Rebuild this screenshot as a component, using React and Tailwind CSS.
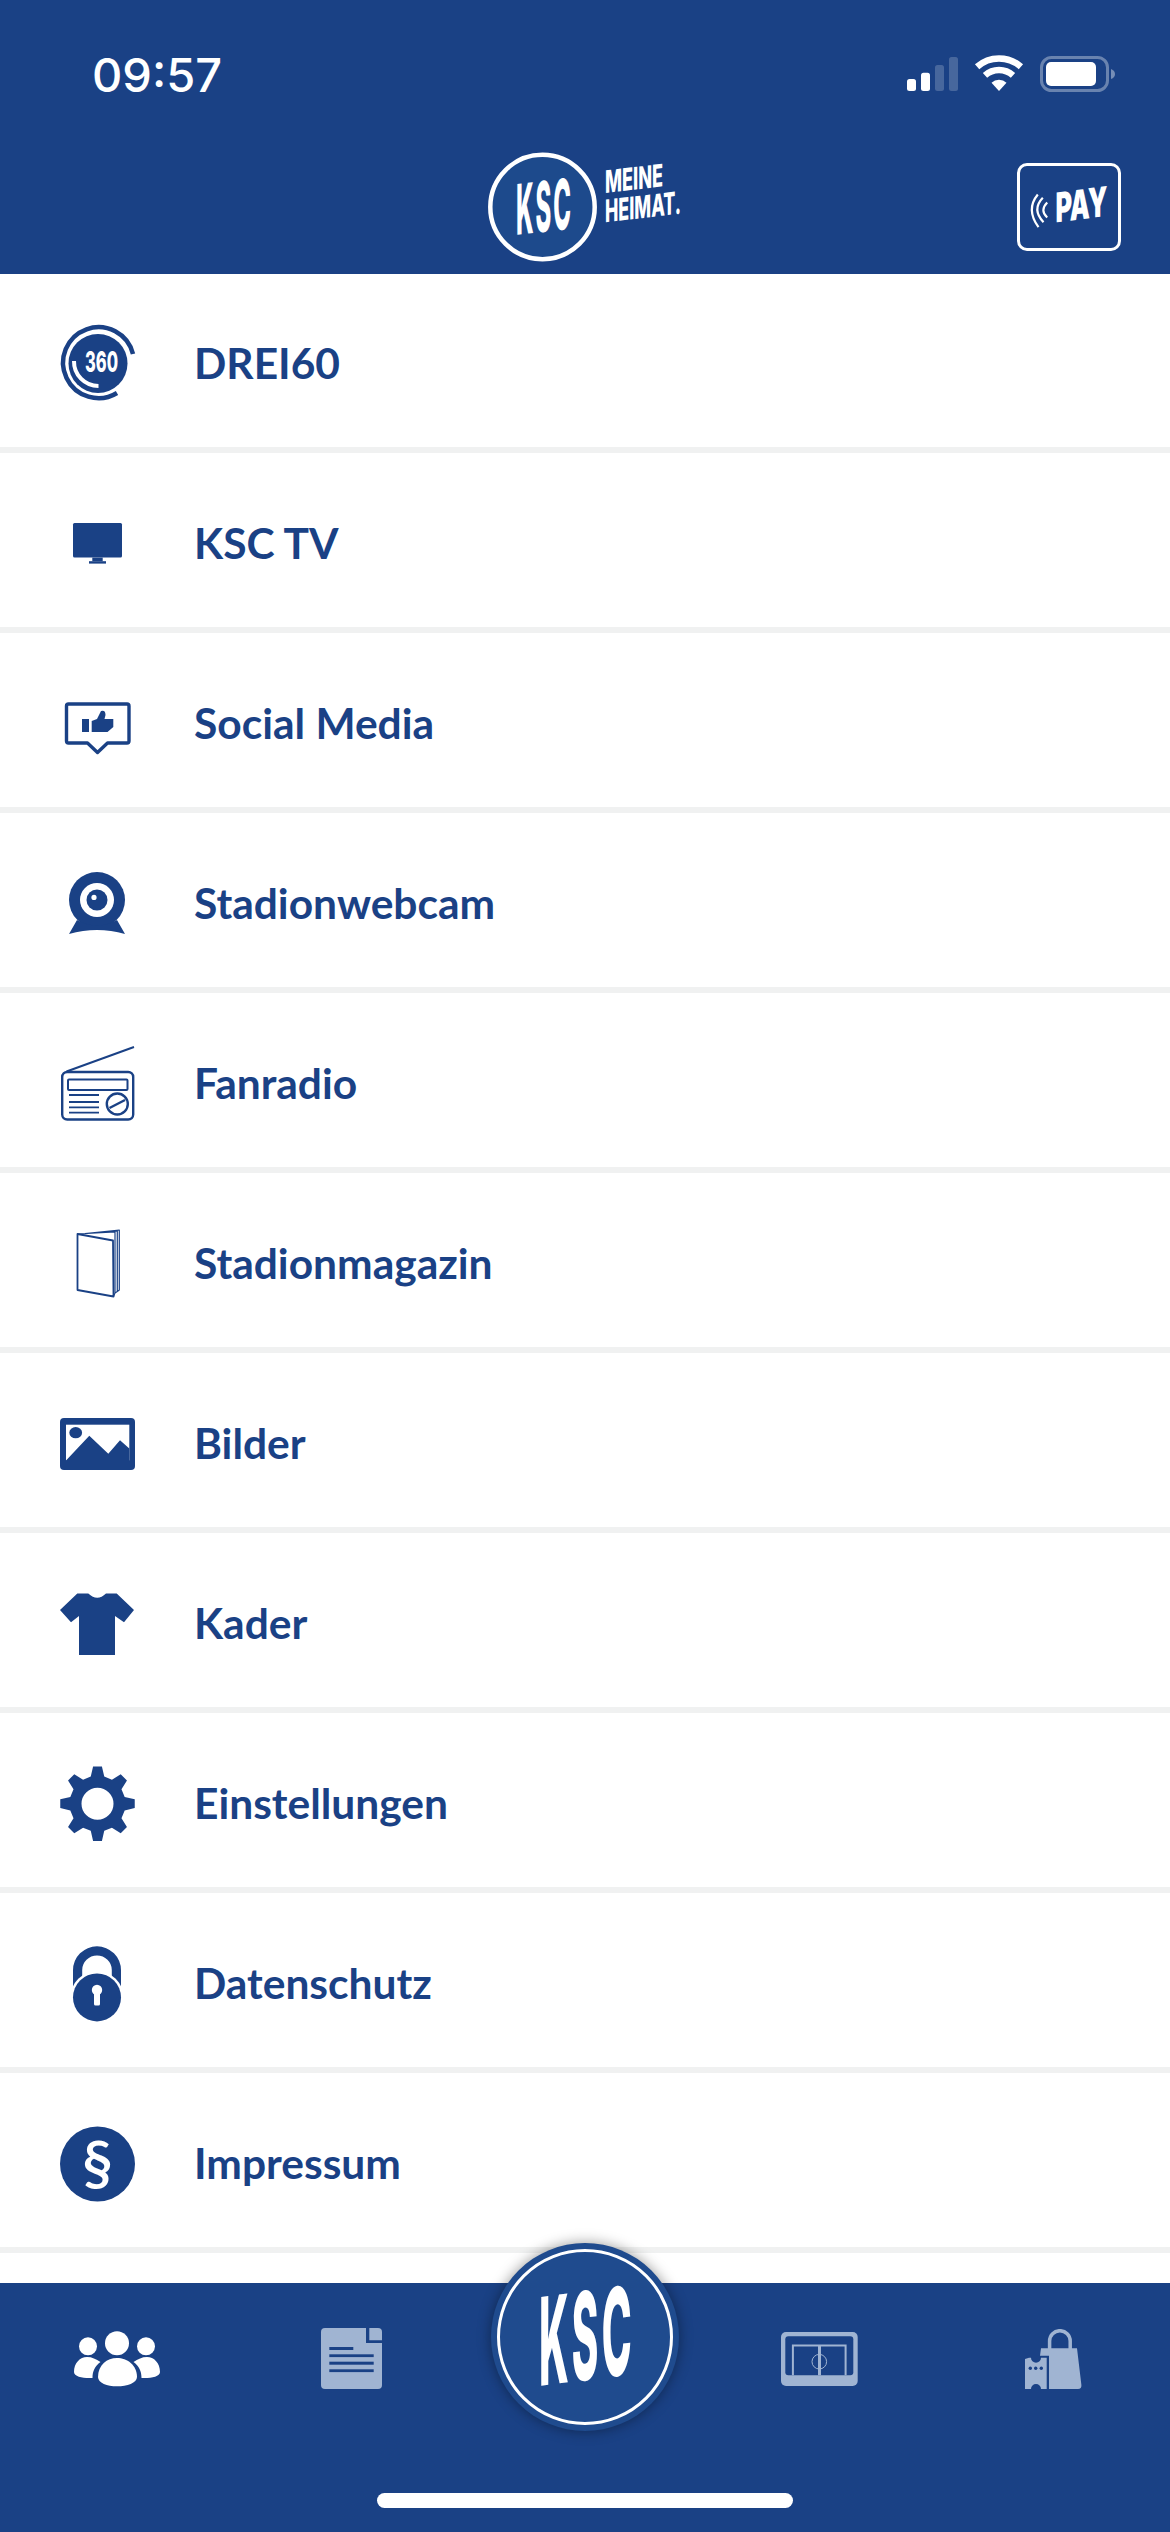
const NAVY = '#1a4185';

function gearPath() {
  const cx = 40.5, cy = 40.7, teeth = 8;
  const pts = [];
  for (let i = 0; i < teeth; i++) {
    const a = (i * Math.PI * 2) / teeth - Math.PI / 2;
    const step = Math.PI / teeth;
    const rows = [
      [28, -step * 0.62],
      [37.5, -step * 0.3],
      [37.5, step * 0.3],
      [28, step * 0.62],
    ];
    rows.forEach(([r, d]) => {
      pts.push(`${(cx + r * Math.cos(a + d)).toFixed(2)} ${(cy + r * Math.sin(a + d)).toFixed(2)}`);
    });
  }
  return `M${pts.join('L')}Z M56.5 40.7 A16 16 0 1 0 24.5 40.7 A16 16 0 1 0 56.5 40.7 Z`;
}

function Icon360() {
  return (
    <>
      <path d="M76 31 A35.5 35.5 0 1 0 60 70" fill="none" stroke={NAVY} strokeWidth="4.5" />
      <circle cx="41" cy="40.4" r="29.5" fill={NAVY} />
      <path d="M17 38 A24.5 24.5 0 0 0 41.5 63" fill="none" stroke="#fff" strokeWidth="4" />
      <text x="28" y="49" textLength="33" lengthAdjust="spacingAndGlyphs" fontSize="28" className="font-['Inter',sans-serif] font-extrabold fill-white">360</text>
    </>
  );
}

function IconTv() {
  return (
    <>
      <rect x="16" y="20" width="49" height="34.6" rx="1.5" fill={NAVY} />
      <rect x="35.3" y="54.6" width="10.4" height="3.6" fill={NAVY} />
      <rect x="32" y="58.2" width="17" height="2.4" fill={NAVY} />
    </>
  );
}

function IconSocial() {
  return (
    <>
      <path d="M11.5 21 H70 Q72 21 72 23 V58 Q72 60 70 60 H50.5 L40.5 69.5 L30.5 60 H11.5 Q9.5 60 9.5 58 V23 Q9.5 21 11.5 21 Z" fill="none" stroke={NAVY} strokeWidth="3.4" strokeLinejoin="round" />
      <rect x="25" y="36" width="7" height="13" fill={NAVY} />
      <path d="M34.7 38 L40 36 L44 28 Q48.5 26.5 48.5 32 L47.5 36 H56.3 V44 L50.5 49 H34.7 Z" fill={NAVY} />
    </>
  );
}

function IconWebcam() {
  return (
    <>
      <circle cx="40" cy="37" r="28" fill={NAVY} />
      <circle cx="40" cy="37" r="17" fill="#fff" />
      <circle cx="40" cy="37" r="10.5" fill={NAVY} />
      <circle cx="37" cy="34.4" r="2.6" fill="#fff" />
      <path d="M20 57 L12 71 Q40 63 68 71 L60 57 Q40 68 20 57 Z" fill={NAVY} />
    </>
  );
}

function IconRadio() {
  return (
    <g fill="none" stroke={NAVY}>
      <path d="M9.5 28.5 L77 4" strokeWidth="2" />
      <rect x="5.2" y="29" width="71" height="47.5" rx="5" strokeWidth="2.4" />
      <rect x="11" y="36.6" width="59.5" height="10.4" rx="1" strokeWidth="2" />
      <path d="M12 52 H42 M12 59 H42 M12 64.4 H42 M12 69.6 H42" strokeWidth="1.8" />
      <circle cx="60.3" cy="61" r="10.5" strokeWidth="2.4" />
      <path d="M52.5 65 L68 57" strokeWidth="2.4" />
    </g>
  );
}

function IconMagazine() {
  return (
    <g fill="none" stroke={NAVY} strokeLinejoin="round">
      <path d="M20.5 11 L56 17.5 L56.5 73.5 L20.5 67 Z" strokeWidth="1.8" />
      <path d="M20.5 11 L58 9 V70 L56.5 73.5 M24 11 L60.3 8 V68.5 L58 70 M28 10.5 L62.3 7 V67 L60.3 68.5" strokeWidth="1.2" />
    </g>
  );
}

function IconPicture() {
  return (
    <>
      <rect x="3" y="15" width="75" height="52" rx="4" fill={NAVY} />
      <rect x="9" y="21.7" width="63.3" height="35.7" fill="#fff" />
      <ellipse cx="18.7" cy="29.7" rx="6.4" ry="5.6" fill={NAVY} />
      <path d="M9 57.4 L32.3 32.8 L51.3 50.7 L63 37.3 L72.3 45.4 V58 H9 Z" fill={NAVY} />
    </>
  );
}

function IconShirt() {
  return <path d="M3 27 L20.3 10.6 H31.3 Q40.3 19 49 10.6 H59.7 L77 27 L67 39.2 L58 33 V72 H22 V33 L14 39.2 Z" fill={NAVY} />;
}

function IconGear() {
  return <path d={gearPath()} fill={NAVY} fillRule="evenodd" />;
}

function IconLock() {
  return (
    <>
      <path d="M16 44 V27.3 A24 24 0 0 1 64 27.3 V44 H54.8 V27 A14.8 14.5 0 0 0 25.2 27 V44 Z" fill={NAVY} />
      <circle cx="40" cy="54.4" r="26.5" fill="#fff" />
      <circle cx="40" cy="54.4" r="24" fill={NAVY} />
      <circle cx="40" cy="47" r="5.2" fill="#fff" />
      <rect x="37" y="47" width="6" height="15.5" rx="1.5" fill="#fff" />
    </>
  );
}

function IconParagraph() {
  return (
    <>
      <circle cx="40.5" cy="41" r="37.5" fill={NAVY} />
      <text x="40.5" y="62" textAnchor="middle" fontSize="62" className="font-['Lato',sans-serif] font-semibold fill-white">§</text>
    </>
  );
}

const ITEMS = [
  { label: 'DREI60', Icon: Icon360 },
  { label: 'KSC TV', Icon: IconTv },
  { label: 'Social Media', Icon: IconSocial },
  { label: 'Stadionwebcam', Icon: IconWebcam },
  { label: 'Fanradio', Icon: IconRadio },
  { label: 'Stadionmagazin', Icon: IconMagazine },
  { label: 'Bilder', Icon: IconPicture },
  { label: 'Kader', Icon: IconShirt },
  { label: 'Einstellungen', Icon: IconGear },
  { label: 'Datenschutz', Icon: IconLock },
  { label: 'Impressum', Icon: IconParagraph },
];

function StatusIcons() {
  return (
    <svg width="208" height="38" viewBox="0 0 208 38">
      <rect x="0" y="24" width="9" height="12" rx="2.5" fill="#fff" />
      <rect x="14" y="17.7" width="9" height="18.3" rx="2.5" fill="#fff" />
      <rect x="28" y="10" width="9" height="26" rx="2.5" fill="#fff" fillOpacity="0.2" />
      <rect x="42" y="2" width="9" height="34" rx="2.5" fill="#fff" fillOpacity="0.2" />
      <path d="M70.1 11.7 A33 33 0 0 1 113.9 11.7" fill="none" stroke="#fff" strokeWidth="6.5" />
      <path d="M78 20.4 A21 21 0 0 1 106 20.4" fill="none" stroke="#fff" strokeWidth="6.5" />
      <path d="M92 36 L84.5 27.8 A11 11 0 0 1 99.5 27.8 Z" fill="#fff" />
      <rect x="134.5" y="2.5" width="66" height="33" rx="10" fill="none" stroke="#fff" strokeOpacity="0.35" strokeWidth="3" />
      <rect x="139" y="7" width="50" height="24" rx="5" fill="#fff" />
      <path d="M204 14 Q208 15.5 208 19 Q208 22.5 204 24 Z" fill="#fff" fillOpacity="0.4" />
    </svg>
  );
}

function HeaderLogo() {
  return (
    <svg width="194" height="110" viewBox="0 0 194 110" className="overflow-visible">
      <circle cx="54.5" cy="55" r="52.2" fill="#1d4a8c" stroke="#fff" strokeWidth="4.5" />
      <text transform="translate(28 83) skewY(-6.6)" textLength="57" lengthAdjust="spacingAndGlyphs" fontSize="70" letterSpacing="6" className="font-['Inter',sans-serif] font-extrabold fill-white">KSC</text>
      <text transform="translate(117 41) skewY(-6.6)" textLength="58" lengthAdjust="spacingAndGlyphs" fontSize="31" className="font-['Inter',sans-serif] font-extrabold fill-white">MEINE</text>
      <text transform="translate(117 70.3) skewY(-6.6)" textLength="76" lengthAdjust="spacingAndGlyphs" fontSize="31" className="font-['Inter',sans-serif] font-extrabold fill-white">HEIMAT.</text>
    </svg>
  );
}

function PayButton() {
  return (
    <div className="w-[104px] h-[88px] rounded-[10px] border-[3.5px] border-white">
      <svg width="97" height="81" viewBox="3.5 3.5 97 81" className="overflow-visible">
        <g fill="none" stroke="#fff" strokeWidth="2.2">
          <path d="M21.3 32 Q9 47 22 64.7" />
          <path d="M26.3 35.3 Q15 47 27 59.7" />
          <path d="M30.7 40 Q23 48 30.7 55" />
        </g>
        <text transform="translate(39 60) skewY(-7.3)" textLength="52" lengthAdjust="spacingAndGlyphs" fontSize="41" className="font-['Inter',sans-serif] font-black fill-white">PAY</text>
      </svg>
    </div>
  );
}

function TabPeople() {
  return (
    <svg width="86" height="56" viewBox="0 0 86 56" fill="#fff">
      <circle cx="43" cy="12.3" r="12" />
      <path d="M24 46 C24 34 33 27 43 27 C53 27 63 34 63 46 C63 52 53 55.3 43 55.3 C33 55.3 24 52 24 46 Z" />
      <circle cx="14" cy="15.3" r="9" />
      <path d="M0 41 C0 32 6 26 13 26 C18 26 22 28 26.5 31 C21 35 18.5 40 18.5 47 C10 47.5 0 46 0 41 Z" />
      <circle cx="72" cy="15.3" r="9" />
      <path d="M86 41 C86 32 80 26 73 26 C68 26 64 28 59.5 31 C65 35 67.5 40 67.5 47 C76 47.5 86 46 86 41 Z" />
    </svg>
  );
}

function TabDoc() {
  return (
    <svg width="61" height="61" viewBox="0 0 61 61">
      <rect width="61" height="61" rx="4" fill="#a0b4d2" />
      <path d="M45 0 H61 V15 H45 Z" fill={NAVY} />
      <path d="M48.3 0 H57 Q61 0 61 4 V12.3 H48.3 Z" fill="#a0b4d2" />
      <rect x="8.3" y="19" width="24" height="3" fill={NAVY} />
      <rect x="8.3" y="26.3" width="44.4" height="2.8" fill={NAVY} />
      <rect x="8.3" y="33.7" width="44.4" height="3" fill={NAVY} />
      <rect x="8.3" y="41.3" width="44.4" height="2.8" fill={NAVY} />
    </svg>
  );
}

function TabStadium() {
  return (
    <svg width="77" height="54" viewBox="0 0 77 54">
      <rect width="76.7" height="54" rx="5" fill="#a0b4d2" />
      <rect x="4.3" y="4.3" width="68" height="39" rx="3" fill={NAVY} />
      <path d="M11.9 43.3 V13.5 H64.6 V43.3" fill="none" stroke="#a0b4d2" strokeWidth="2" />
      <rect x="37" y="13.5" width="3" height="29.8" fill="#a0b4d2" />
      <circle cx="38.3" cy="29.7" r="7.3" fill="none" stroke="#a0b4d2" strokeWidth="1" />
    </svg>
  );
}

function TabShop() {
  return (
    <svg width="57" height="60" viewBox="0 0 57 60">
      <path d="M24.6 20 V12 A10.3 10.3 0 0 1 45.2 12 V20" fill="none" stroke="#a0b4d2" strokeWidth="3.5" />
      <path d="M16 19.3 H52 L56.4 56 Q56.7 60 53 60 H24 V26.8 H15 Z" fill="#a0b4d2" />
      <path d="M0 30 L4 28.7 H6 A5 5 0 0 0 16 28.7 H21.7 V60 H16 A5 5 0 0 0 6 60 H0 Z" fill="#a0b4d2" />
      <circle cx="5.3" cy="39.3" r="1.7" fill={NAVY} />
      <circle cx="10.7" cy="39.3" r="1.7" fill={NAVY} />
      <circle cx="16.3" cy="39.3" r="1.7" fill={NAVY} />
    </svg>
  );
}

function CenterButton() {
  return (
    <div className="absolute left-1/2 top-[-40px] -translate-x-1/2 w-[188px] h-[188px] rounded-full bg-[#1f4b8e] p-[6px] shadow-[0_0_14px_rgba(0,0,0,0.4)]">
      <div className="w-full h-full rounded-full border-[3px] border-white flex items-center justify-center">
        <svg width="170" height="170" viewBox="9 9 170 170" className="shrink-0 overflow-visible">
          <text transform="translate(48 143) skewY(-7.5)" textLength="96" lengthAdjust="spacingAndGlyphs" fontSize="122" letterSpacing="10" className="font-['Inter',sans-serif] font-extrabold fill-white">KSC</text>
        </svg>
      </div>
    </div>
  );
}

export default function App() {
  return (
    <div className="w-[1170px] h-[2532px] flex flex-col overflow-hidden bg-white font-['Lato',sans-serif]">
      <header className="h-[274px] shrink-0 bg-[#1a4185]">
        <div className="h-[148px] flex items-center justify-between pl-[92px] pr-[55px]">
          <span className="font-['Inter',sans-serif] font-medium text-[47px] leading-none text-white">09:57</span>
          <StatusIcons />
        </div>
        <div className="h-[118px] grid grid-cols-[1fr_auto_1fr] items-center">
          <div />
          <HeaderLogo />
          <div className="justify-self-end pr-[49px]">
            <PayButton />
          </div>
        </div>
      </header>

      <main className="flex-1 overflow-hidden">
        {ITEMS.map(({ label, Icon }) => (
          <div key={label} className="h-[180px] pt-[6px] first:h-[179px] first:pt-[5px] flex items-center border-b-[6px] border-[#f0f1f1]">
            <div className="w-[194px] flex justify-center">
              <svg width="80" height="80" viewBox="0 0 80 80" className="overflow-visible">
                <Icon />
              </svg>
            </div>
            <span className="text-[42.5px] font-bold text-[#1a4185]">{label}</span>
          </div>
        ))}
      </main>

      <footer className="relative h-[249px] shrink-0 bg-[#1a4185]">
        <CenterButton />
        <div className="grid grid-cols-5 pt-[45px]">
          <div className="h-[61px] flex items-center justify-center"><TabPeople /></div>
          <div className="h-[61px] flex items-center justify-center"><TabDoc /></div>
          <div />
          <div className="h-[61px] flex items-center justify-center"><TabStadium /></div>
          <div className="h-[61px] flex items-center justify-center"><TabShop /></div>
        </div>
        <div className="mx-auto mt-[104px] w-[416px] h-[15px] rounded-full bg-white" />
      </footer>
    </div>
  );
}
